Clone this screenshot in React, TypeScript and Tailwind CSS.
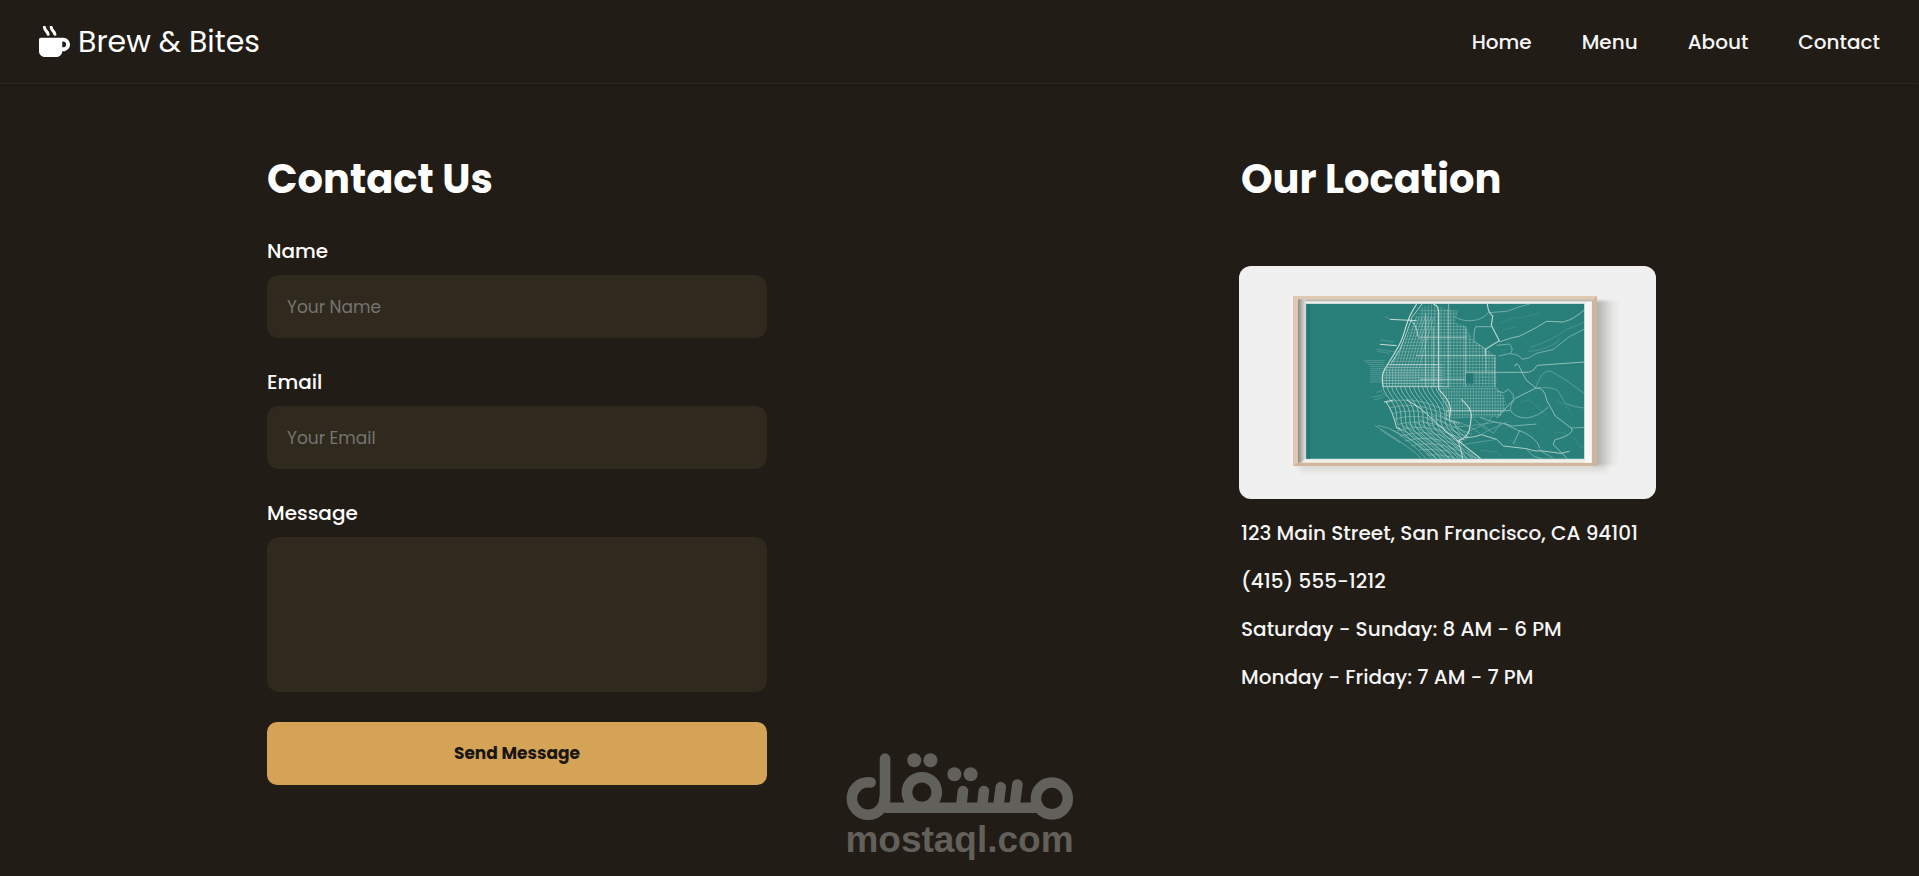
import React, { useState } from 'react';
import { FaMugHot } from 'react-icons/fa';

const navLinks = ['Home', 'Menu', 'About', 'Contact'];

const details = [
  '123 Main Street, San Francisco, CA 94101',
  '(415) 555-1212',
  'Saturday - Sunday: 8 AM - 6 PM',
  'Monday - Friday: 7 AM - 7 PM',
];

const fieldStyle =
  'block w-full rounded-xl bg-[#30291e] px-5 text-[17px] text-white placeholder:text-[#767470] outline-none focus:ring-1 focus:ring-[#d5a356]';

// n evenly spaced values between a and b
const steps = (a: number, b: number, n: number) =>
  Array.from({ length: n }, (_, i) => a + ((b - a) * i) / (n - 1));

const CityMap: React.FC = () => (
  <svg viewBox="57 378 1251 699" role="img" aria-label="Map of the city in a wooden frame" className="block w-full rounded-xl">
    <defs>
      <linearGradient id="frameShadow" x1="0" x2="1">
        <stop offset="0" stopColor="#a5a39f" />
        <stop offset="0.3" stopColor="#c4c3c0" />
        <stop offset="0.6" stopColor="#e2e2e0" />
        <stop offset="1" stopColor="#f0f0f0" stopOpacity="0" />
      </linearGradient>
      <linearGradient id="innerShadow" x1="0" x2="1">
        <stop offset="0" stopColor="#8f8b86" />
        <stop offset="1" stopColor="#dededb" />
      </linearGradient>
      <filter id="soft" x="-20%" y="-20%" width="140%" height="140%">
        <feGaussianBlur stdDeviation="9" />
      </filter>
      <filter id="softEdge" x="-20%" y="-20%" width="140%" height="140%">
        <feGaussianBlur stdDeviation="4" />
      </filter>
      <clipPath id="sheet">
        <rect x="259" y="492" width="833" height="464" />
      </clipPath>
      <clipPath id="north">
        <path d="M588 525 606 500 640 492 690 510 714 512 704 548 736 556 760 604 800 626 828 652 830 742 486 742 494 690 514 664 560 590Z" />
      </clipPath>
      <clipPath id="east">
        <path d="M655 742H830L850 764 862 800 840 830 690 836 664 780Z" />
      </clipPath>
      <clipPath id="west">
        <path d="M486 740H646L690 790V836L760 880 716 914 782 956H640L560 908 512 868 536 860 500 786Z" />
      </clipPath>
    </defs>

    <rect x="57" y="378" width="1251" height="699" fill="#f0f0f0" />
    <rect x="240" y="500" width="920" height="492" fill="#d8d8d6" filter="url(#soft)" />
    <rect x="1120" y="482" width="90" height="494" fill="url(#frameShadow)" filter="url(#softEdge)" />

    {/* Frame */}
    <rect x="219" y="468" width="912" height="510" fill="#dfc9b0" />
    <path d="M1131 468V978H1115V484Z" fill="#cdb59d" />
    <path d="M219 978 234 968H1115L1131 978Z" fill="#d0b79c" />
    <rect x="234" y="478" width="881" height="490" fill="#f1f0ed" />
    <rect x="234" y="478" width="881" height="6" fill="#bdb8b0" />
    <path d="M234 478H256V956L244 968H234Z" fill="url(#innerShadow)" />
    <rect x="1095" y="486" width="20" height="482" fill="#f8f8f7" />
    <rect x="256" y="490" width="838" height="468" fill="#b9d3cf" />
    <rect x="259" y="492" width="833" height="464" fill="#29807b" />
    <rect x="259" y="492" width="12" height="464" fill="#237772" />

    <g clipPath="url(#sheet)" fill="none" stroke="#a9cbc5">
      {/* Street grid */}
      <g clipPath="url(#north)" strokeWidth="1.7">
        {steps(606, 826, 24).map((x) => (
          <path key={x} d={`M${x} 492V742`} opacity=".7" />
        ))}
        {steps(512, 740, 25).map((y) => (
          <path key={y} d={`M480 ${y}H840`} opacity=".65" />
        ))}
        {steps(500, 596, 12).map((x) => (
          <path key={x} d={`M${x} 745V690Q${x + 10} 640 ${x + 46} 530`} opacity=".9" />
        ))}
        {steps(674, 738, 9).map((y) => (
          <path key={y} d={`M480 ${y}H670`} opacity=".9" />
        ))}
      </g>
      <g clipPath="url(#east)" strokeWidth="1.7" opacity=".7">
        {steps(662, 850, 24).map((x) => (
          <path key={x} d={`M${x} 742V838`} />
        ))}
        {steps(746, 834, 10).map((y) => (
          <path key={y} d={`M650 ${y}H880`} />
        ))}
      </g>
      <g clipPath="url(#west)" strokeWidth="2.4" opacity=".9">
        {steps(488, 660, 14).map((x) => (
          <path key={x} d={`M${x} 740C${x + 8} 775 ${x + 44} 785 ${x + 42} 835S${x + 100} 895 ${x + 165} 975`} />
        ))}
        {steps(0, 230, 15).map((d) => (
          <path key={d} d={`M${490 + d / 2} ${790 + d}Q${570 + d / 2} ${765 + d} ${650 + d / 2} ${800 + d}T${800 + d / 2} ${860 + d}`} strokeWidth="1.6" />
        ))}
        {steps(0, 140, 9).map((d) => (
          <path key={d} d={`M${512 + d} ${868 - d / 3}Q${590 + d} ${900 - d / 3} ${670 + d} 975`} strokeWidth="1.8" />
        ))}
      </g>

      {/* Piers */}
      <g strokeWidth="1.5" opacity=".6">
        {steps(662, 726, 12).map((y, i) => (
          <path key={y} d={`M${i < 3 ? 432 + i * 6 : 450} ${y}H494`} />
        ))}
        <path d="M496 530 512 538M470 628 528 636M480 600 524 606M472 634 510 640M456 772 486 766M462 780 490 772M470 758 488 750M484 756 500 770" />
        <path d="M464 856Q520 890 556 916T604 956M474 856 510 866Q570 900 618 956M482 870 540 908" strokeWidth="2.4" />
      </g>
      <path d="M510 538 590 542M480 613 530 617M492 786 520 780" strokeWidth="3" stroke="#c6dcd7" />

      {/* Waterfront highway */}
      <g stroke="#c9dbd5" strokeWidth="3.5">
        <path d="M590 492Q566 528 556 566T526 636 494 688 490 742" />
        <path d="M606 492 576 532 560 578 540 628 514 670" strokeWidth="2.5" />
        <path d="M566 538Q590 548 594 590" strokeWidth="2.5" />
        <path d="M498 786Q518 812 530 864L542 868" strokeWidth="3" />
        <path d="M640 492Q656 498 656 516V748Q688 778 692 808L688 836" />
        <path d="M686 492V742M617 520V742M640 560V742" strokeWidth="2.2" opacity=".8" />
        <path d="M596 592H740M588 647H828M490 740H686M500 674H656M600 718H734M736 697H836" strokeWidth="2.2" opacity=".85" />
        <path d="M736 560V740M798 626V696M824 650V742" strokeWidth="2.2" opacity=".75" />
        <path d="M724 778Q756 806 754 828T748 870 716 902L732 916 782 956" />
        <path d="M560 780Q600 800 640 840T700 890 728 956" strokeWidth="3" />
        <path d="M680 812H870M680 812V838L720 850" strokeWidth="2.4" opacity=".8" />
      </g>

      {/* Hill roads */}
      <g stroke="#8fbeb8" strokeWidth="3">
        <path d="M802 492Q804 518 818 528L814 556Q826 580 838 602L796 628V646" stroke="#bdd6d0" strokeWidth="3.5" />
        <path d="M704 530Q726 544 756 542T806 518L860 514Q880 508 898 500L930 492" opacity=".7" />
        <path d="M818 560H768Q760 570 762 604L798 628" opacity=".8" />
        <path d="M838 606Q874 592 900 588L950 562 980 544 1030 546Q1062 538 1092 510" />
        <path d="M830 616 868 612Q882 624 872 640L836 648M872 642Q898 642 906 658 930 656 950 640L1000 628 1048 590 1092 568" opacity=".75" />
        <path d="M930 622Q1000 600 1036 570L1092 548M924 634Q980 632 1020 600" opacity=".3" />
        <path d="M836 697H926Q942 694 952 676L1010 672 1092 666" />
        <path d="M884 680Q890 660 902 688L918 720 948 744 884 776 830 834" />
        <path d="M948 744Q974 742 980 780L1006 828 1056 866Q1062 884 1004 900L1000 914 1042 956" />
        <path d="M948 744Q990 738 1014 752L1036 790Q1060 802 1092 804M948 740Q966 686 994 694L1040 722 1092 760" opacity=".5" />
        <path d="M882 780Q866 800 874 816 890 834 920 834 954 830 984 802M830 752 850 758 866 748 880 764V778" opacity=".75" />
        <path d="M734 894Q764 892 784 884L830 898 850 918 920 926Q950 936 962 932L1022 940 1048 934" stroke="#a9cbc5" />
        <path d="M780 832Q820 848 850 850L896 872Q928 880 952 908L960 926M850 850 878 858 950 852M900 870 880 912" opacity=".8" />
        <path d="M956 930 982 944 1000 956M918 926 940 948 966 956M1054 864 1092 862" opacity=".7" />
        <path d="M690 840Q740 850 780 880M700 862 760 856 830 846M740 876 800 850 820 826M770 890 830 860 862 846M790 856 820 880 842 850M760 836 800 870M680 930 740 912 830 898" strokeWidth="2" opacity=".7" />
        <path d="M840 552Q870 530 910 532L960 520M850 570 890 560M1000 880Q1030 870 1040 886M780 930 830 936 850 956M870 900 900 920M1010 780 1040 800 1060 830M900 790Q930 770 940 790L980 830M1060 890 1080 920 1092 920" strokeWidth="1.5" opacity=".35" />
      </g>
      <rect x="738" y="700" width="22" height="31" fill="#237772" stroke="none" />
    </g>
  </svg>
);

const Watermark: React.FC = () => (
  <div className="pointer-events-none absolute inset-x-0 bottom-4 flex flex-col items-center text-[#62605a]">
    <svg viewBox="45 38 684 202" role="img" aria-label="مستقل" className="h-[67px] w-[228px]" fill="currentColor">
      <g fill="none" stroke="currentColor" strokeWidth="32" strokeLinecap="round">
        <circle cx="664" cy="175" r="48" />
        <circle cx="272" cy="156" r="45" />
        <circle cx="110" cy="175" r="49" pathLength="360" strokeDasharray="278 82" />
        <line x1="161" y1="55" x2="161" y2="180" />
        <line x1="160" y1="203" x2="625" y2="203" strokeLinecap="butt" />
        <line x1="396" y1="153" x2="391" y2="195" />
        <line x1="459" y1="153" x2="454" y2="195" />
        <line x1="510" y1="141" x2="503" y2="195" />
        <line x1="560" y1="133" x2="552" y2="195" />
      </g>
      <circle cx="249" cy="60" r="21" />
      <circle cx="298" cy="60" r="21" />
      <circle cx="370" cy="102" r="21" />
      <circle cx="419" cy="102" r="21" />
    </svg>
    <span className="font-['Liberation_Sans',sans-serif] text-[37px] leading-10 font-bold">mostaql.com</span>
  </div>
);

export default function App() {
  const [form, setForm] = useState({ name: '', email: '', message: '' });

  const handleChange = (e: React.ChangeEvent<HTMLInputElement | HTMLTextAreaElement>) =>
    setForm({ ...form, [e.target.name]: e.target.value });

  return (
    <div className="relative min-h-screen bg-[#211c15] font-[Poppins,Inter,sans-serif] text-white">
      {/* Header */}
      <header className="flex h-[84px] items-center justify-between border-b border-[#2d2820] px-[39px] shadow-sm">
        <a href="#" className="flex items-center gap-2 text-3xl">
          <FaMugHot className="size-[31px]" />
          Brew &amp; Bites
        </a>
        <nav className="flex gap-[50px] text-xl font-medium text-[#f5f5f5]">
          {navLinks.map((link) => (
            <a key={link} href={`#${link.toLowerCase()}`}>
              {link}
            </a>
          ))}
        </nav>
      </header>

      <main className="mx-auto flex max-w-[1393px] flex-wrap justify-between gap-10 pt-[65px] pl-1">
        {/* Contact form */}
        <section className="w-full max-w-[500px]">
          <h1 className="mb-7 text-[40px] leading-[60px] font-bold">Contact Us</h1>
          <form className="flex flex-col gap-[30px]" onSubmit={(e) => e.preventDefault()}>
            <div>
              <label htmlFor="name" className="mb-[10px] block text-xl font-medium">Name</label>
              <input id="name" name="name" type="text" placeholder="Your Name" value={form.name} onChange={handleChange} className={`${fieldStyle} h-[63px]`} />
            </div>
            <div>
              <label htmlFor="email" className="mb-[10px] block text-xl font-medium">Email</label>
              <input id="email" name="email" type="email" placeholder="Your Email" value={form.email} onChange={handleChange} className={`${fieldStyle} h-[63px]`} />
            </div>
            <div>
              <label htmlFor="message" className="mb-[10px] block text-xl font-medium">Message</label>
              <textarea id="message" name="message" value={form.message} onChange={handleChange} className={`${fieldStyle} h-[155px] resize-none py-5`} />
            </div>
            <button type="submit" className="h-[63px] rounded-[10px] bg-[#d5a356] text-[17px] font-bold text-[#1a1611]">
              Send Message
            </button>
          </form>
        </section>

        {/* Location */}
        <section className="w-full max-w-[417px]">
          <h2 className="mb-[57px] pl-0.5 text-[40px] leading-[60px] font-bold">Our Location</h2>
          <CityMap />
          <ul className="mt-5 flex flex-col gap-5 pl-0.5 text-xl font-medium text-[#f5f5f5]">
            {details.map((line) => (
              <li key={line}>{line}</li>
            ))}
          </ul>
        </section>
      </main>

      <Watermark />
    </div>
  );
}
